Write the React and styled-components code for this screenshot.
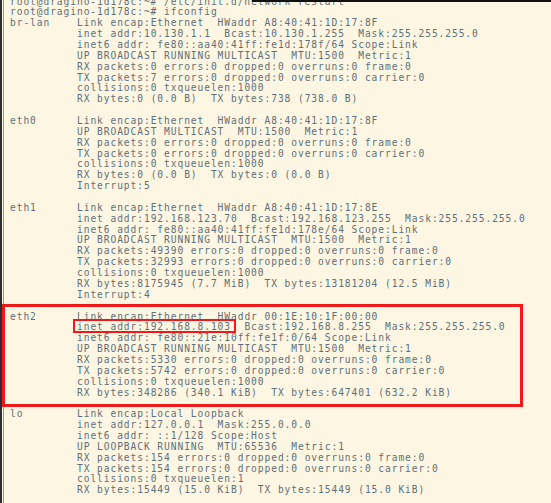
import styled, { createGlobalStyle } from "styled-components";

const GlobalStyle = createGlobalStyle`
  html, body {
    margin: 0;
    padding: 0;
    background: #fdf6e3;
    overflow: hidden;
  }
`;

const Screen = styled.div`
  position: relative;
  min-height: 100vh;
  box-sizing: border-box;
  border-left: 2px solid #2e2e2e;
  box-shadow: inset 1px 0 0 #fdf6e3, inset 2px 0 0 #9a9a9a;
  padding-left: 8px;
  overflow: hidden;
`;

const TopEdge = styled.div`
  position: absolute;
  top: 0;
  left: 250px;
  right: 0;
  height: 2px;
  background: #111;
`;

const Terminal = styled.div`
  margin-top: -3.43px;
  font-family: "DejaVu Sans Mono", "Liberation Mono", monospace;
  font-size: 9.6px;
  letter-spacing: 0.92px;
  line-height: 10.86px;
  color: #5d7078;
  white-space: pre;
`;

const Output = styled.div`
  display: flex;
  flex-direction: column;
  gap: 10.86px;
`;

const Line = styled.div`
  height: 10.86px;
`;

const Iface = styled.div`
  display: grid;
  grid-template-columns: 67px auto;
  ${(p) =>
    p.$highlight &&
    `
    width: 521px;
    box-sizing: border-box;
    margin: -7.6px 0 -8.6px -8.5px;
    padding: 4.6px 0 5.6px 5.5px;
    border: 3px solid #f01818;
  `}
`;

const Name = styled.div``;

const Details = styled.div`
  display: flex;
  flex-direction: column;
`;

const Mark = styled.span`
  position: relative;

  &::after {
    content: "";
    position: absolute;
    left: -3.7px;
    right: -4.9px;
    top: -2.4px;
    bottom: -0.6px;
    border: 2.5px solid #f01818;
  }
`;

const prompt = [
  "root@dragino-1d178c:~# /etc/init.d/network restart",
  "root@dragino-1d178c:~# ifconfig",
];

const interfaces = [
  {
    name: "br-lan",
    lines: [
      "Link encap:Ethernet  HWaddr A8:40:41:1D:17:8F",
      "inet addr:10.130.1.1  Bcast:10.130.1.255  Mask:255.255.255.0",
      "inet6 addr: fe80::aa40:41ff:fe1d:178f/64 Scope:Link",
      "UP BROADCAST RUNNING MULTICAST  MTU:1500  Metric:1",
      "RX packets:0 errors:0 dropped:0 overruns:0 frame:0",
      "TX packets:7 errors:0 dropped:0 overruns:0 carrier:0",
      "collisions:0 txqueuelen:1000",
      "RX bytes:0 (0.0 B)  TX bytes:738 (738.0 B)",
    ],
  },
  {
    name: "eth0",
    lines: [
      "Link encap:Ethernet  HWaddr A8:40:41:1D:17:8F",
      "UP BROADCAST MULTICAST  MTU:1500  Metric:1",
      "RX packets:0 errors:0 dropped:0 overruns:0 frame:0",
      "TX packets:0 errors:0 dropped:0 overruns:0 carrier:0",
      "collisions:0 txqueuelen:1000",
      "RX bytes:0 (0.0 B)  TX bytes:0 (0.0 B)",
      "Interrupt:5",
    ],
  },
  {
    name: "eth1",
    lines: [
      "Link encap:Ethernet  HWaddr A8:40:41:1D:17:8E",
      "inet addr:192.168.123.70  Bcast:192.168.123.255  Mask:255.255.255.0",
      "inet6 addr: fe80::aa40:41ff:fe1d:178e/64 Scope:Link",
      "UP BROADCAST RUNNING MULTICAST  MTU:1500  Metric:1",
      "RX packets:49390 errors:0 dropped:0 overruns:0 frame:0",
      "TX packets:32993 errors:0 dropped:0 overruns:0 carrier:0",
      "collisions:0 txqueuelen:1000",
      "RX bytes:8175945 (7.7 MiB)  TX bytes:13181204 (12.5 MiB)",
      "Interrupt:4",
    ],
  },
  {
    name: "eth2",
    highlight: true,
    mark: "inet addr:192.168.8.103",
    lines: [
      "Link encap:Ethernet  HWaddr 00:1E:10:1F:00:00",
      "inet addr:192.168.8.103  Bcast:192.168.8.255  Mask:255.255.255.0",
      "inet6 addr: fe80::21e:10ff:fe1f:0/64 Scope:Link",
      "UP BROADCAST RUNNING MULTICAST  MTU:1500  Metric:1",
      "RX packets:5330 errors:0 dropped:0 overruns:0 frame:0",
      "TX packets:5742 errors:0 dropped:0 overruns:0 carrier:0",
      "collisions:0 txqueuelen:1000",
      "RX bytes:348286 (340.1 KiB)  TX bytes:647401 (632.2 KiB)",
    ],
  },
  {
    name: "lo",
    lines: [
      "Link encap:Local Loopback",
      "inet addr:127.0.0.1  Mask:255.0.0.0",
      "inet6 addr: ::1/128 Scope:Host",
      "UP LOOPBACK RUNNING  MTU:65536  Metric:1",
      "RX packets:154 errors:0 dropped:0 overruns:0 frame:0",
      "TX packets:154 errors:0 dropped:0 overruns:0 carrier:0",
      "collisions:0 txqueuelen:1",
      "RX bytes:15449 (15.0 KiB)  TX bytes:15449 (15.0 KiB)",
    ],
  },
];

const renderLine = (line, mark) => {
  if (mark && line.startsWith(mark)) {
    return (
      <>
        <Mark>{mark}</Mark>
        {line.slice(mark.length)}
      </>
    );
  }
  return line;
};

export default function App() {
  return (
    <>
      <GlobalStyle />
      <Screen>
        <Terminal>
          {prompt.map((line) => (
            <Line key={line}>{line}</Line>
          ))}
          <Output>
            {interfaces.map((iface) => (
              <Iface key={iface.name} $highlight={iface.highlight}>
                <Name>{iface.name}</Name>
                <Details>
                  {iface.lines.map((line) => (
                    <Line key={line}>{renderLine(line, iface.mark)}</Line>
                  ))}
                </Details>
              </Iface>
            ))}
          </Output>
        </Terminal>
        <TopEdge />
      </Screen>
    </>
  );
}
